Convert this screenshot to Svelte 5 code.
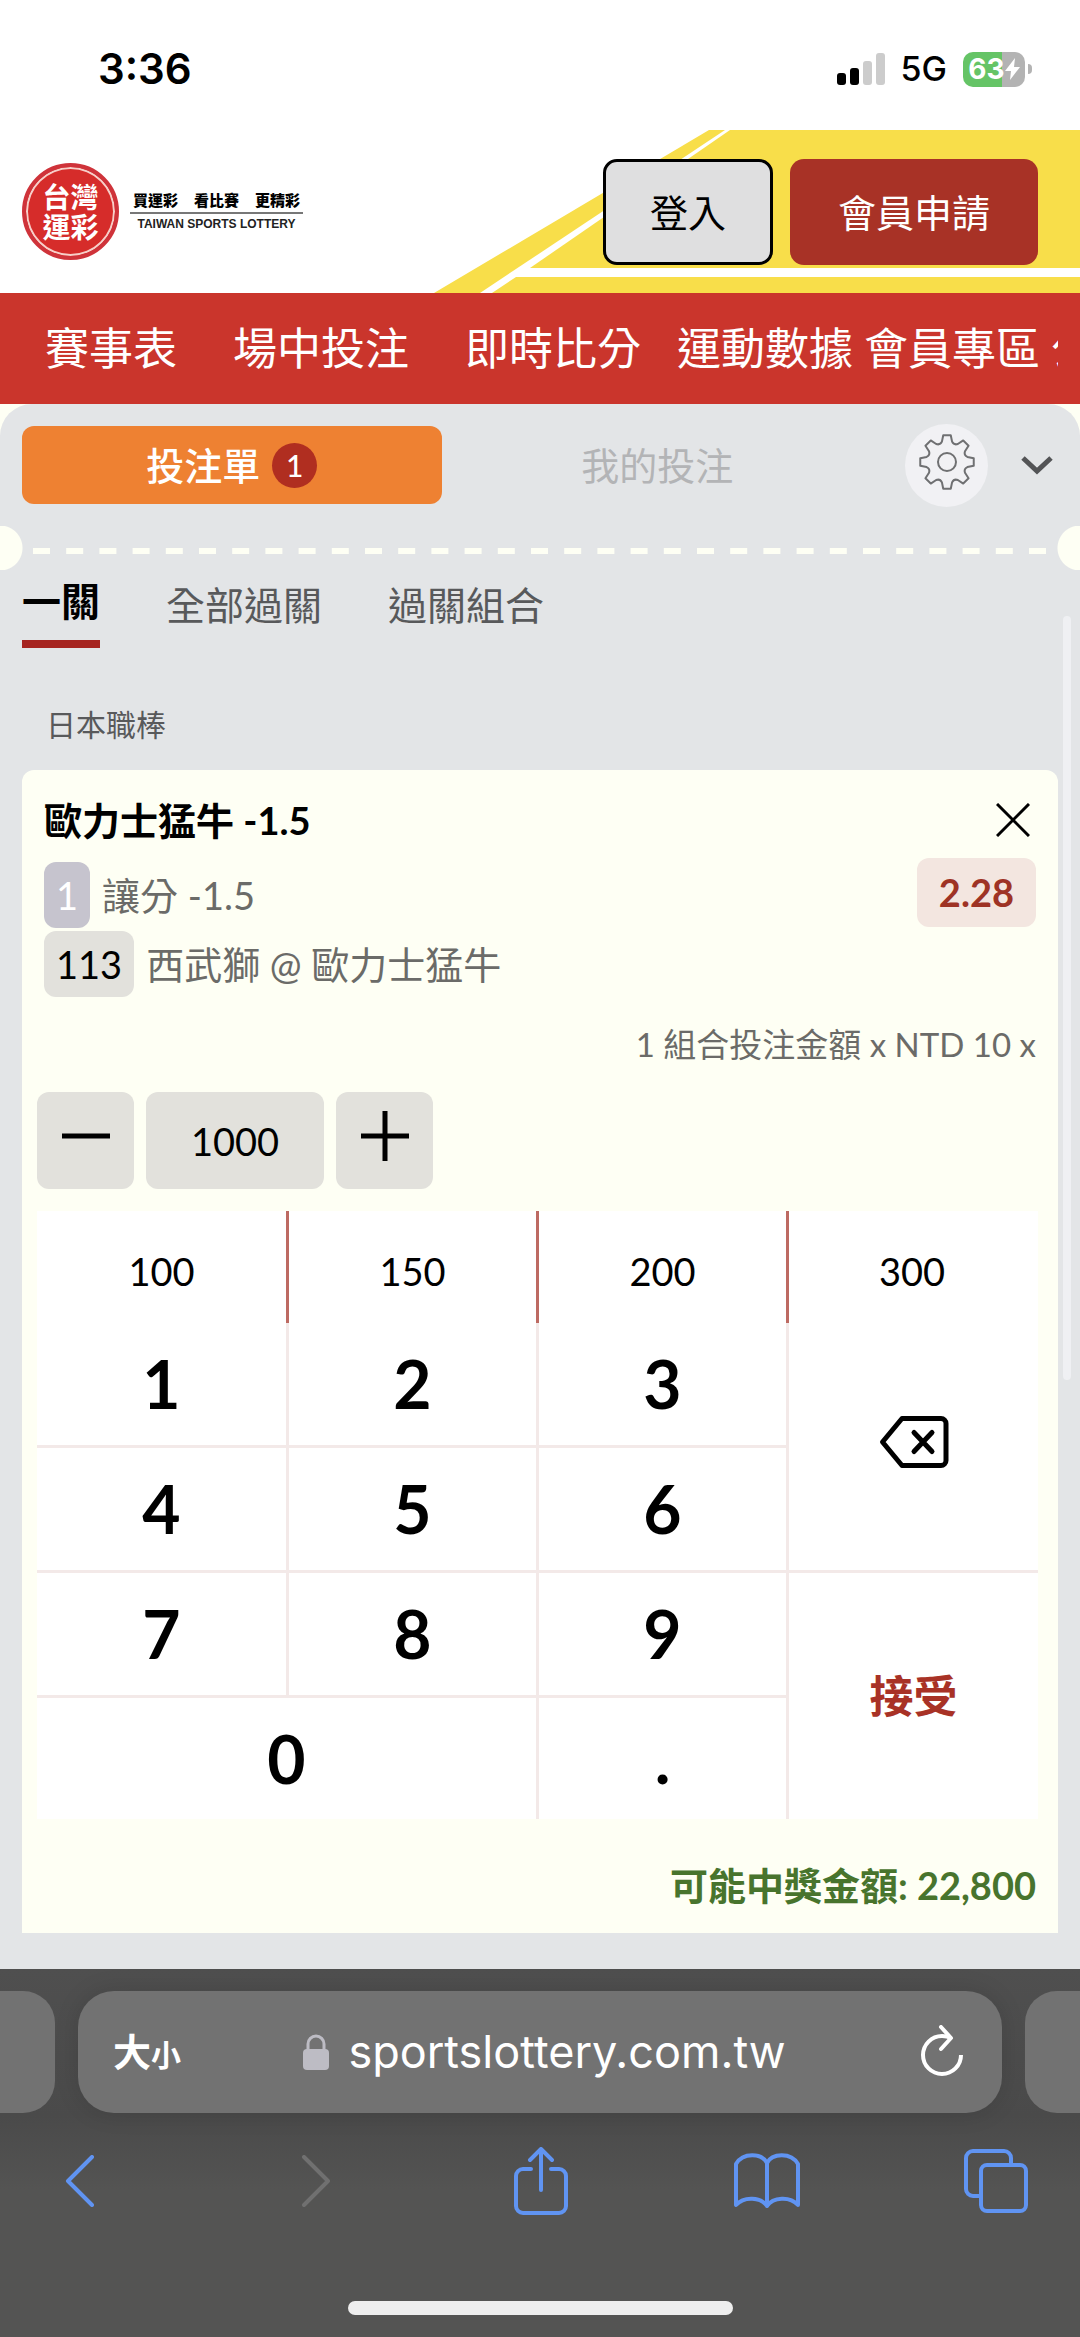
<script>
  const navItems = [
    { label: '賽事表', size: 'wide' },
    { label: '場中投注', size: 'wide' },
    { label: '即時比分', size: 'medium' },
    { label: '運動數據', size: 'tight' },
    { label: '會員專區', size: 'tight' },
    { label: '公告', size: 'tight' }
  ];
  const quickAmounts = [100, 150, 200, 300];
  const digits = ['1', '2', '3', '4', '5', '6', '7', '8', '9'];

  let amount = $state('1000');

  // Outline of the eight-toothed settings gear, centred on 0,0.
  function gearPath() {
    const at = (deg, r) => {
      const rad = ((deg - 90) * Math.PI) / 180;
      return `${(r * Math.cos(rad)).toFixed(2)} ${(r * Math.sin(rad)).toFixed(2)}`;
    };
    let d = '';
    for (let k = 0; k < 8; k++) {
      const a = k * 45;
      d += `${k ? 'L' : 'M'}${at(a - 8, 27)}L${at(a + 8, 27)}L${at(a + 14, 21)}Q${at(a + 22.5, 18)} ${at(a + 31, 21)}`;
    }
    return d + 'Z';
  }
  const gear = gearPath();

  const step = (by) => (amount = String(Math.max(0, Number(amount) + by)));
</script>

<div class="screen">
  <div class="status">
    <span class="clock">3:36</span>
    <div class="indicators">
      <svg width="48" height="32" viewBox="0 0 48 32" aria-hidden="true">
        <rect x="0" y="20" width="9" height="12" rx="3" fill="#000" />
        <rect x="13" y="15" width="9" height="17" rx="3" fill="#000" />
        <rect x="26" y="8" width="9" height="24" rx="3" fill="#ccc" />
        <rect x="39" y="0" width="9" height="32" rx="3" fill="#ccc" />
      </svg>
      <span class="network">5G</span>
      <div class="battery">
        <span>63</span>
        <svg width="15" height="24" viewBox="0 0 15 24" aria-hidden="true">
          <path d="M10 1L0 14h6L5 23l10-13H9z" fill="#fff" />
        </svg>
      </div>
      <i class="cap"></i>
    </div>
  </div>

  <header>
    <svg class="stripes" width="646" height="163" viewBox="434 130 646 163" aria-hidden="true">
      <path fill="#f8de4a" d="M709 130H725L480 293H434z" />
      <path fill="#f8de4a" d="M730 130H1080V268H530z" />
      <path fill="#f8de4a" d="M516 277H1080V293H492z" />
    </svg>
    <a class="brand" href="#home">
      <span class="seal"><span>台灣<br />運彩</span></span>
      <span class="slogan">
        <span class="zh"><span>買運彩</span><span>看比賽</span><span>更精彩</span></span>
        <span class="en">TAIWAN SPORTS LOTTERY</span>
      </span>
    </a>
    <div class="account">
      <button class="login">登入</button>
      <button class="join">會員申請</button>
    </div>
  </header>

  <nav>
    <div class="nav-track">
      {#each navItems as item}
        <a class={item.size} href="#nav">{item.label}</a>
      {/each}
    </div>
  </nav>

  <main>
    <section class="slip">
      <div class="slip-tabs">
        <button class="slip-tab active">投注單 <span class="count">1</span></button>
        <button class="slip-tab">我的投注</button>
        <button class="gear" aria-label="設定">
          <svg width="60" height="60" viewBox="-30 -30 60 60" fill="none" stroke="#6f7072" stroke-width="2" stroke-linejoin="round">
            <path d={gear} />
            <circle r="9" />
          </svg>
        </button>
        <button class="collapse" aria-label="收合">
          <svg width="34" height="20" viewBox="0 0 34 20" fill="none" stroke="#535456" stroke-width="5">
            <path d="M3 3l14 13L31 3" />
          </svg>
        </button>
      </div>

      <div class="tear">
        <svg width="100%" height="6" aria-hidden="true">
          <line x1="0" y1="3" x2="100%" y2="3" stroke="#fefff4" stroke-width="6" stroke-dasharray="17 16.2" />
        </svg>
      </div>

      <div class="modes">
        <button class="mode current">一關</button>
        <button class="mode">全部過關</button>
        <button class="mode">過關組合</button>
      </div>

      <h2>日本職棒</h2>

      <article>
        <div class="row title">
          <h3>歐力士猛牛 -1.5</h3>
          <button class="close" aria-label="移除">
            <svg width="34" height="34" viewBox="0 0 34 34" stroke="#000" stroke-width="3">
              <path d="M1 1L33 33M33 1L1 33" />
            </svg>
          </button>
        </div>
        <div class="pick">
          <div class="lines">
            <div class="row line"><span class="chip pale">1</span><span>讓分 -1.5</span></div>
            <div class="row line"><span class="chip">113</span><span>西武獅 @ 歐力士猛牛</span></div>
          </div>
          <span class="odds">2.28</span>
        </div>
        <label class="formula" for="stake">1 組合投注金額 x NTD 10 x</label>
        <div class="stepper">
          <button aria-label="減少" onclick={() => step(-100)}>
            <svg width="48" height="50" viewBox="0 0 48 50" stroke="#000" stroke-width="5"><path d="M0 25H48" /></svg>
          </button>
          <input id="stake" bind:value={amount} />
          <button aria-label="增加" onclick={() => step(100)}>
            <svg width="48" height="50" viewBox="0 0 48 50" stroke="#000" stroke-width="5"><path d="M0 25H48M24 0V50" /></svg>
          </button>
        </div>

        <div class="pad">
          {#each quickAmounts as value}
            <button class="quick" onclick={() => (amount = String(value))}>{value}</button>
          {/each}
          {#each digits as digit}
            <button class="key" onclick={() => (amount += digit)}>{digit}</button>
          {/each}
          <button class="key last zero" onclick={() => (amount += '0')}>0</button>
          <button class="key last" onclick={() => (amount += '.')}>.</button>
          <button class="erase" aria-label="刪除" onclick={() => (amount = amount.slice(0, -1))}>
            <svg width="70" height="54" viewBox="0 0 70 54" fill="none" stroke="#000" stroke-width="5" stroke-linejoin="round" stroke-linecap="round">
              <path d="M23 3.500H62a5 5 0 0 1 5 5V45.500a5 5 0 0 1-5 5H23L3.500 27z" />
              <path d="M35 17.500L53 36.500M53 17.500L35 36.500" />
            </svg>
          </button>
          <button class="accept">接受</button>
        </div>

        <p class="payout">可能中獎金額: 22,800</p>
      </article>
      <i class="scrollbar"></i>
    </section>
  </main>

  <footer>
    <div class="address-row">
      <i class="peek left"></i>
      <div class="address">
        <button class="text-size" aria-label="文字大小">大<small>小</small></button>
        <a class="url" href="#site">
          <svg width="26" height="36" viewBox="0 0 26 36" aria-hidden="true">
            <path d="M5 17V10a8 8 0 0 1 16 0V17" fill="none" stroke="#bdbcc4" stroke-width="3" />
            <rect y="15" width="26" height="21" rx="4" fill="#bdbcc4" />
          </svg>
          <span>sportslottery.com.tw</span>
        </a>
        <button class="reload" aria-label="重新載入">
          <svg width="44" height="54" viewBox="0 0 44 54" fill="none" stroke="#fff" stroke-width="4" stroke-linecap="butt" stroke-linejoin="round">
            <path d="M41 30A19 19 0 1 1 22 11q5 0 9 2" />
            <path d="M21 2L31 13L21 24" stroke-linecap="round" />
          </svg>
        </button>
      </div>
      <i class="peek right"></i>
    </div>
    <div class="tools">
      <button aria-label="上一頁">
        <svg width="30" height="52" viewBox="0 0 30 52"><path d="M27 2L3 26L27 50" /></svg>
      </button>
      <button class="off" aria-label="下一頁">
        <svg width="30" height="52" viewBox="0 0 30 52"><path d="M3 2L27 26L3 50" /></svg>
      </button>
      <button aria-label="分享">
        <svg width="54" height="68" viewBox="0 0 54 68">
          <path d="M17 22H9a7 7 0 0 0-7 7V59a7 7 0 0 0 7 7H45a7 7 0 0 0 7-7V29a7 7 0 0 0-7-7H37M27 43V3M16 13L27 2L38 13" />
        </svg>
      </button>
      <button aria-label="書籤">
        <svg width="66" height="56" viewBox="0 0 66 56">
          <path d="M33 53C27 44 10 43 2 52V11C9-1 28 0 33 10C38 0 57-1 64 11V52C56 43 39 44 33 53V10" />
        </svg>
      </button>
      <button aria-label="分頁">
        <svg width="64" height="64" viewBox="0 0 64 64">
          <path d="M16 47H9a7 7 0 0 1-7-7V9a7 7 0 0 1 7-7H40a7 7 0 0 1 7 7V16" />
          <rect x="17" y="16" width="45" height="46" rx="6" />
        </svg>
      </button>
    </div>
    <i class="home-bar"></i>
  </footer>
</div>

<style>
  :global(body) {
    margin: 0;
    background: #fff;
  }
  .screen,
  .screen * {
    box-sizing: border-box;
  }
  .screen {
    font-family: Lato, 'Noto Sans CJK TC', sans-serif;
    font-size: 38px;
    line-height: 44px;
    color: #000;
    overflow: hidden;
  }
  button,
  input {
    font: inherit;
    color: inherit;
    border: 0;
    padding: 0;
    margin: 0;
    background: none;
  }
  a {
    color: inherit;
    text-decoration: none;
  }
  svg {
    display: block;
    flex: none;
  }
  h2,
  h3,
  p {
    margin: 0;
  }

  .status {
    height: 130px;
    padding: 8px 48px 0 98px;
    display: flex;
    align-items: center;
    justify-content: space-between;
    font-family: Inter, sans-serif;
  }
  .clock {
    font-size: 42px;
    font-weight: 600;
  }
  .indicators {
    display: flex;
    align-items: center;
  }
  .network {
    font-size: 34px;
    font-weight: 500;
    margin: 0 16px;
  }
  .battery {
    width: 62px;
    height: 35px;
    border-radius: 10px;
    background: linear-gradient(90deg, #65c466 63%, #b3b3b3 63%);
    display: flex;
    align-items: center;
    justify-content: center;
    color: #fff;
    font-size: 28px;
    font-weight: 700;
  }
  .cap {
    width: 4px;
    height: 10px;
    margin-left: 3px;
    border-radius: 0 4px 4px 0;
    background: #b3b3b3;
  }

  header {
    position: relative;
    height: 163px;
    padding: 0 42px 0 22px;
    display: flex;
    align-items: center;
    justify-content: space-between;
  }
  .stripes {
    position: absolute;
    top: 0;
    right: 0;
  }
  .brand {
    position: relative;
    display: flex;
    align-items: center;
    gap: 11px;
  }
  .seal {
    width: 97px;
    height: 97px;
    border-radius: 50%;
    background: #d62c2a;
    border: 4px solid #cf333a;
    box-shadow: inset 0 0 0 2px #f7cfc9;
    display: flex;
    align-items: center;
    justify-content: center;
    color: #fff;
    font-size: 28px;
    line-height: 30px;
    font-weight: 700;
  }
  .slogan {
    width: 173px;
    display: flex;
    flex-direction: column;
  }
  .zh {
    display: flex;
    justify-content: space-between;
    padding: 0 3px 2px;
    border-bottom: 2px solid #777;
    font-size: 15px;
    line-height: 20px;
    font-weight: 900;
  }
  .en {
    font: 700 12px/20px 'Liberation Sans', sans-serif;
    text-align: center;
    color: #222;
    white-space: nowrap;
  }
  .account {
    position: relative;
    display: flex;
    gap: 17px;
  }
  .account button {
    height: 106px;
    border-radius: 14px;
    white-space: nowrap;
  }
  .account .login {
    padding: 0 44px;
    border: 3px solid #000;
    background: #dfdfe0;
  }
  .account .join {
    padding: 0 48px;
    background: #a83226;
    color: #fff;
  }

  nav {
    height: 111px;
    padding: 0 22px;
    background: #ca352c;
    color: #fff;
    font-size: 44px;
    line-height: 111px;
  }
  .nav-track {
    display: flex;
    overflow: hidden;
    padding-left: 23px;
    white-space: nowrap;
  }
  .nav-track a {
    flex: none;
  }
  .wide {
    margin-right: 56px;
  }
  .medium {
    margin-right: 36px;
  }
  .tight {
    margin-right: 11px;
  }

  main {
    background: #fefff4;
  }
  .slip {
    position: relative;
    overflow: hidden;
    padding: 22px 22px 36px;
    border-radius: 32px 32px 0 0;
    background: #e3e5e7;
  }
  .slip-tabs {
    display: flex;
    align-items: center;
    height: 78px;
  }
  .slip-tab {
    flex: 1;
    height: 78px;
    border-radius: 12px;
    display: flex;
    align-items: center;
    justify-content: center;
    gap: 12px;
    color: #b3b4b6;
  }
  .slip-tab.active {
    margin-right: 6px;
    background: #ee8132;
    color: #fff;
    font-weight: 500;
  }
  .count {
    width: 45px;
    height: 45px;
    border-radius: 50%;
    background: #b02e20;
    font-size: 30px;
    line-height: 45px;
  }
  .gear {
    width: 83px;
    height: 83px;
    margin: 0 28px 0 38px;
    padding-bottom: 6px;
    border-radius: 50%;
    background: #f1f1f4;
    display: flex;
    align-items: center;
    justify-content: center;
  }
  .collapse {
    width: 42px;
    height: 78px;
    display: flex;
    align-items: center;
    justify-content: center;
  }

  .tear {
    display: flex;
    align-items: center;
    height: 44px;
    margin: 22px -22px 0;
    padding: 6px 33px 0;
    background:
      radial-gradient(circle at 0 50%, #fefff4 22px, transparent 23px),
      radial-gradient(circle at 100% 50%, #fefff4 22px, transparent 23px);
  }
  .tear svg {
    flex: 1;
  }

  .modes {
    display: flex;
    gap: 66px;
    height: 78px;
  }
  .mode {
    height: 78px;
    padding-bottom: 8px;
    color: #58595b;
    font-size: 39px;
  }
  .mode.current {
    border-bottom: 8px solid #a62420;
    color: #000;
    font-weight: 700;
  }
  h2 {
    padding: 54px 24px 24px;
    font-size: 30px;
    font-weight: 400;
    color: #58595b;
  }

  article {
    padding: 24px 22px 26px;
    border-radius: 12px 12px 0 0;
    background: #fefff4;
  }
  .row {
    display: flex;
    align-items: center;
  }
  .title {
    height: 52px;
    justify-content: space-between;
    padding-right: 6px;
  }
  h3 {
    font-size: 38px;
    font-weight: 700;
  }
  .pick {
    display: flex;
    justify-content: space-between;
    padding-top: 12px;
    color: #6b6b68;
  }
  .lines {
    padding-top: 2px;
  }
  .line {
    gap: 12px;
    height: 69px;
  }
  .chip {
    height: 66px;
    padding: 0 12px;
    border-radius: 12px;
    background: #e2e1dc;
    color: #000;
    line-height: 66px;
  }
  .chip.pale {
    background: #c6c4ce;
    color: #fff;
  }
  .odds {
    height: 69px;
    padding: 0 22px;
    border-radius: 12px;
    background: #f3e6e0;
    color: #9e3325;
    font-weight: 700;
    line-height: 69px;
  }
  .formula {
    display: block;
    padding: 24px 0 26px;
    text-align: right;
    font-size: 33px;
    color: #6b6b68;
  }
  .stepper {
    display: flex;
    gap: 12px;
    margin: 0 -7px;
  }
  .stepper button,
  .stepper input {
    height: 97px;
    border-radius: 12px;
    background: #e2e1dc;
  }
  .stepper button {
    width: 97px;
    padding-bottom: 10px;
    display: flex;
    align-items: center;
    justify-content: center;
  }
  .stepper input {
    width: 178px;
    text-align: center;
  }

  .pad {
    display: grid;
    grid-template-columns: 252fr 250fr 250fr 249fr;
    grid-template-rows: 112px 125px 125px 125px 121px;
    margin: 22px -2px 0 -7px;
    background: #fff;
  }
  .quick {
    border-right: 3px solid #bd6a62;
    padding-top: 8px;
  }
  .quick:nth-child(4) {
    border-color: transparent;
  }
  .key {
    border-right: 3px solid #f3e9e8;
    border-bottom: 3px solid #f3e9e8;
    font-size: 66px;
    font-weight: 700;
  }
  .key:nth-child(3n + 5) {
    grid-column: 1;
  }
  .last {
    border-bottom: 0;
  }
  .key.zero {
    grid-column: 1 / 3;
  }
  .key.last:not(.zero) {
    grid-column: 3;
  }
  .erase,
  .accept {
    grid-column: 4;
    display: flex;
    align-items: center;
    justify-content: center;
  }
  .erase {
    grid-row: 2 / 4;
    padding-bottom: 10px;
    border-bottom: 3px solid #f3e9e8;
  }
  .accept {
    grid-row: 4 / 6;
    color: #a83226;
    font-size: 44px;
    font-weight: 700;
  }
  .payout {
    padding-top: 44px;
    text-align: right;
    font-weight: 700;
    color: #48742d;
  }
  .scrollbar {
    position: absolute;
    top: 212px;
    right: 9px;
    width: 8px;
    height: 764px;
    border-radius: 4px;
    background: #eff0f3;
  }

  footer {
    padding: 22px 0 22px;
    background: linear-gradient(#4f4f4f, #4a4a4a 40%, #545453 60%);
    color: #fff;
  }
  .address-row {
    display: flex;
    gap: 23px;
  }
  .peek,
  .address {
    height: 122px;
    background: #727272;
  }
  .peek {
    width: 55px;
  }
  .peek.left {
    border-radius: 0 32px 32px 0;
  }
  .peek.right {
    border-radius: 32px 0 0 32px;
  }
  .address {
    flex: 1;
    display: flex;
    align-items: center;
    justify-content: space-between;
    padding: 0 38px 0 35px;
    border-radius: 36px;
    box-shadow: 0 0 24px rgba(0, 0, 0, 0.12);
  }
  .text-size {
    font-weight: 700;
  }
  .text-size small {
    font-size: 30px;
  }
  .url {
    display: flex;
    align-items: center;
    gap: 19px;
    margin-right: 12px;
    font-family: Inter, sans-serif;
    font-size: 45px;
  }
  .tools {
    display: grid;
    grid-template-columns: 236fr 213fr 221fr 230fr 64px;
    align-items: center;
    justify-items: start;
    height: 68px;
    margin: 34px 52px 0 65px;
  }
  .tools svg {
    fill: none;
    stroke: #6094f2;
    stroke-width: 4;
    stroke-linecap: round;
    stroke-linejoin: round;
  }
  .tools .off svg {
    stroke: #707070;
  }
  .home-bar {
    display: block;
    width: 385px;
    height: 14px;
    margin: 86px auto 0;
    border-radius: 7px;
    background: #eee;
  }
</style>
